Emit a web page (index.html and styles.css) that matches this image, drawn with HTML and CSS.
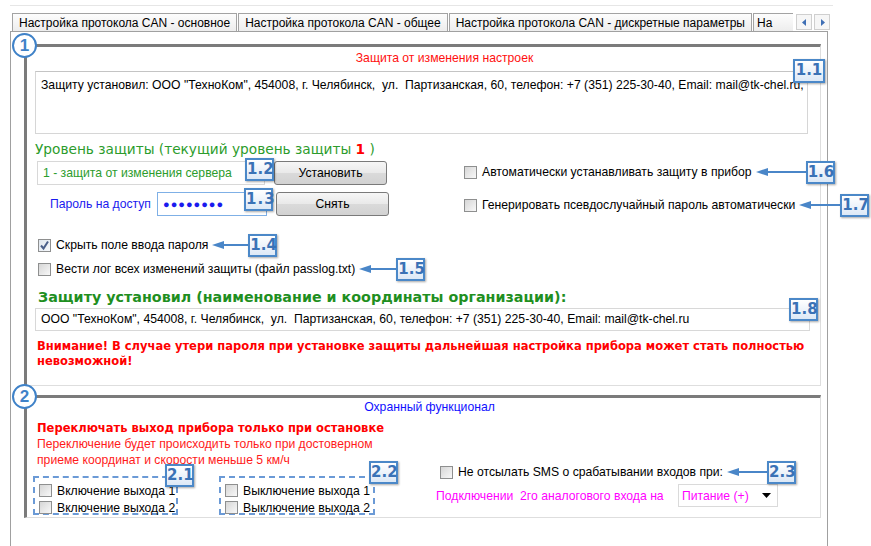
FILE: index.html
```html
<!DOCTYPE html>
<html>
<head>
  <meta charset="utf-8">
  <title>Защита от изменения настроек</title>
  <link rel="stylesheet" href="styles.css">
</head>
<body>
  <div class="frame">
    <div class="tabstrip">
      <div class="tablist">
        <div class="tab">Настройка протокола CAN - основное</div>
        <div class="tab">Настройка протокола CAN - общее</div>
        <div class="tab">Настройка протокола CAN - дискретные параметры</div>
        <div class="tab tab-last">На</div>
      </div>
      <div class="scroller">
        <span class="scroll-btn"><svg width="5" height="7" viewBox="0 0 5 7"><path d="M4 0 L0 3.5 L4 7 Z" fill="#3f6fb5"/></svg></span>
        <span class="scroll-btn"><svg width="5" height="7" viewBox="0 0 5 7"><path d="M1 0 L5 3.5 L1 7 Z" fill="#3f6fb5"/></svg></span>
      </div>
    </div>

    <div class="page">
      <div class="group group-protect">
        <span class="num">1</span>
        <div class="group-title title-red">Защита от изменения настроек</div>

        <div class="memo">Защиту установил: ООО "ТехноКом", 454008, г. Челябинск,&nbsp; ул.&nbsp; Партизанская, 60, телефон: +7 (351) 225-30-40, Email: mail@tk-chel.ru,
          <span class="callout c-11">1.1</span>
        </div>

        <div class="level">
          <div class="level-left">
            <div class="level-title">Уровень защиты (текущий уровень защиты <b class="cur">1</b> )</div>
            <div class="level-row">
              <div class="field field-level">1 - защита от изменения сервера
                <span class="callout c-12">1.2</span>
              </div>
              <div class="btn">Установить</div>
            </div>
            <div class="level-row row-pass">
              <span class="pass-label">Пароль на доступ</span>
              <div class="field field-pass">●●●●●●●●
                <span class="callout c-13">1.3</span>
              </div>
              <div class="btn">Снять</div>
            </div>
          </div>
          <div class="level-right">
            <div class="check-row">
              <span class="cb"></span>
              <span>Автоматически устанавливать защиту в прибор</span>
              <svg class="arrow" width="50" height="10" viewBox="0 0 50 10"><path d="M0 5 L12 1 L12 9 Z" fill="#4a86c8"/><path d="M10 5 H50" stroke="#4a86c8" stroke-width="2"/></svg>
              <span class="callout">1.6</span>
            </div>
            <div class="check-row row-gen">
              <span class="cb"></span>
              <span>Генерировать псевдослучайный пароль автоматически</span>
              <svg class="arrow" width="41" height="10" viewBox="0 0 41 10"><path d="M0 5 L12 1 L12 9 Z" fill="#4a86c8"/><path d="M10 5 H41" stroke="#4a86c8" stroke-width="2"/></svg>
              <span class="callout">1.7</span>
            </div>
          </div>
        </div>

        <div class="check-row row-hide">
          <span class="cb cb-on"><svg width="11" height="11" viewBox="0 0 11 11"><path d="M2 5.5 L4.5 8.5 L9 1.5" fill="none" stroke="#4a5f8a" stroke-width="2"/></svg></span>
          <span>Скрыть поле ввода пароля</span>
          <svg class="arrow" width="36" height="10" viewBox="0 0 36 10"><path d="M0 5 L12 1 L12 9 Z" fill="#4a86c8"/><path d="M10 5 H36" stroke="#4a86c8" stroke-width="2"/></svg>
          <span class="callout">1.4</span>
        </div>
        <div class="check-row row-log">
          <span class="cb"></span>
          <span>Вести лог всех изменений защиты (файл passlog.txt)</span>
          <svg class="arrow" width="37" height="10" viewBox="0 0 37 10"><path d="M0 5 L12 1 L12 9 Z" fill="#4a86c8"/><path d="M10 5 H37" stroke="#4a86c8" stroke-width="2"/></svg>
          <span class="callout">1.5</span>
        </div>

        <div class="owner-title">Защиту установил (наименование и координаты организации):</div>
        <div class="field field-owner">ООО "ТехноКом", 454008, г. Челябинск,&nbsp; ул.&nbsp; Партизанская, 60, телефон: +7 (351) 225-30-40, Email: mail@tk-chel.ru
          <span class="callout c-18">1.8</span>
        </div>

        <div class="warning">Внимание! В случае утери пароля при установке защиты дальнейшая настройка прибора может стать полностью невозможной!</div>
      </div>

      <div class="group group-guard">
        <span class="num">2</span>
        <div class="group-title title-blue">Охранный функционал</div>
        <div class="guard-body">
          <div class="guard-left">
            <div class="guard-head">Переключать выход прибора только при остановке</div>
            <div class="guard-note">Переключение будет происходить только при достоверном<br>приеме координат и скорости меньше 5 км/ч</div>
            <div class="outs">
              <div class="dash dash-on">
                <span class="callout c-21">2.1</span>
                <div class="check-row"><span class="cb"></span><span>Включение выхода 1</span></div>
                <div class="check-row"><span class="cb"></span><span>Включение выхода 2</span></div>
              </div>
              <div class="dash dash-off">
                <span class="callout c-22">2.2</span>
                <div class="check-row"><span class="cb"></span><span>Выключение выхода 1</span></div>
                <div class="check-row"><span class="cb"></span><span>Выключение выхода 2</span></div>
              </div>
            </div>
          </div>
          <div class="guard-right">
            <div class="check-row row-sms">
              <span class="cb"></span>
              <span>Не отсылать SMS о срабатывании входов при:</span>
              <svg class="arrow" width="40" height="10" viewBox="0 0 40 10"><path d="M0 5 L12 1 L12 9 Z" fill="#4a86c8"/><path d="M10 5 H40" stroke="#4a86c8" stroke-width="2"/></svg>
              <span class="callout">2.3</span>
            </div>
            <div class="analog-row">
              <span class="analog-label">Подключении&nbsp; 2го аналогового входа на</span>
              <div class="combo">Питание (+)
                <svg width="9" height="5" viewBox="0 0 9 5"><path d="M0 0 H9 L4.5 5 Z" fill="#000"/></svg>
              </div>
            </div>
          </div>
        </div>
      </div>
    </div>
  </div>
</body>
</html>
```

FILE: styles.css
```css
body {
  margin: 0;
  background-color: #ffffff;
  color: #000000;
  font-family: "Liberation Sans", Arial, sans-serif;
  font-size: 12.2px;
}

.frame {
  margin: 5px 0 0 10px;
  width: 823px;
  padding-top: 7px;
  border-top: 1px solid #e6e6e6;
}

/* tabs */

.tabstrip {
  display: flex;
  align-items: flex-start;
  width: 820px;
  margin-left: 2px;
}

.tablist {
  display: flex;
  flex: 1;
  height: 18px;
  overflow: hidden;
}

.tab {
  flex-shrink: 0;
  height: 17px;
  line-height: 18px;
  padding: 0 6px;
  margin-right: 1px;
  border: 1px solid #a3a3a3;
  border-bottom: none;
  background: linear-gradient(#fdfdfd, #ededed);
  font-size: 12px;
  white-space: nowrap;
}

.tab-last {
  flex: 1 0 auto;
  padding: 0 3px;
  border-right: none;
}

.scroller {
  display: flex;
  gap: 2px;
  padding: 1px 2px 0 2px;
}

.scroll-btn {
  display: flex;
  align-items: center;
  justify-content: center;
  width: 14px;
  height: 14px;
  border: 1px solid #cfcfcf;
  background: #f6f6f6;
}

.page {
  width: 816px;
  min-height: 520px;
  border: 1px solid #a0a0a0;
  border-bottom: none;
  padding-top: 12px;
}

/* group boxes */

.group {
  position: relative;
  box-sizing: border-box;
  width: 797px;
  margin-left: 13px;
  border-top: 3px solid #7b7b7b;
  border-left: 3px solid #7b7b7b;
  border-right: 1px solid #dedede;
  border-bottom: 1px solid #dedede;
  padding: 4px 12px 0 8px;
}

.num {
  position: absolute;
  left: -15px;
  top: -14px;
  width: 21px;
  height: 21px;
  border: 2px solid #3f82c8;
  border-radius: 50%;
  background: #ffffff;
  color: #3f82c8;
  font-weight: bold;
  font-size: 17px;
  line-height: 21px;
  text-align: center;
}

.group-title {
  height: 14px;
  line-height: 14px;
  text-align: center;
}

.title-red {
  color: #ff1010;
  padding-left: 46px;
}

.title-blue {
  color: #1010ff;
  padding-left: 16px;
}

.callout {
  position: relative;
  display: inline-block;
  box-sizing: border-box;
  width: 29px;
  height: 23px;
  border: 2px solid #4b88c8;
  background: linear-gradient(#ffffff, #dce8f6);
  color: #3a72b6;
  font-family: "DejaVu Sans", sans-serif;
  font-weight: bold;
  font-size: 15px;
  line-height: 19px;
  text-align: center;
  box-shadow: 1px 1px 2px rgba(0, 0, 0, 0.35);
}

.memo .callout,
.field .callout,
.dash .callout {
  position: absolute;
}

.memo {
  position: relative;
  box-sizing: border-box;
  height: 63px;
  margin-top: 6px;
  padding: 6px 5px;
  border: 1px solid #d6d6d6;
  border-top-color: #c4c4c4;
  white-space: nowrap;
}

.c-11 {
  left: 757px;
  top: -13px;
  width: 32px;
  height: 24px;
}

/* protection level */

.level {
  display: flex;
}

.level-left {
  width: 354px;
}

.level-title {
  margin-top: 7px;
  font-family: "DejaVu Sans", sans-serif;
  font-size: 13.7px;
  line-height: 16px;
  color: #2c9c2c;
  white-space: nowrap;
}

.cur {
  color: #ff0000;
}

.level-row {
  display: flex;
  align-items: center;
  margin-top: 4px;
}

.row-pass {
  margin-top: 7px;
}

.field {
  position: relative;
  box-sizing: border-box;
  height: 24px;
  line-height: 22px;
  padding: 0 5px;
  border: 1px solid #d8d8d8;
  white-space: nowrap;
}

.field-level {
  width: 228px;
  margin-left: 2px;
  color: #2c9c2c;
}

.c-12 {
  left: 207px;
  top: -4px;
}

.pass-label {
  width: 122px;
  padding-left: 15px;
  box-sizing: border-box;
  color: #1a1aee;
}

.field-pass {
  width: 110px;
  border-color: #7fb0e6;
  color: #1a1aee;
  font-size: 11px;
  letter-spacing: 1px;
}

.c-13 {
  left: 86px;
  top: -5px;
}

.btn {
  box-sizing: border-box;
  width: 113px;
  height: 24px;
  margin-left: 9px;
  line-height: 22px;
  border: 1px solid #7a7a7a;
  border-radius: 3px;
  background: linear-gradient(#f6f6f6 0%, #e9e9e9 50%, #dadada 51%, #d2d2d2 100%);
  text-align: center;
}

.level-right {
  padding: 31px 0 0 75px;
}

.row-gen {
  margin-top: 19px;
}

/* checkboxes */

.check-row {
  display: flex;
  align-items: center;
  height: 14px;
  white-space: nowrap;
}

.cb {
  display: inline-flex;
  align-items: center;
  justify-content: center;
  box-sizing: border-box;
  width: 13px;
  height: 13px;
  margin-right: 5px;
  border: 1px solid #8e8f8f;
  background: linear-gradient(135deg, #d6d6d6, #f8f8f8);
  flex-shrink: 0;
}

.cb-on {
  background: linear-gradient(135deg, #dfe6ee, #f6f8fb);
}

.arrow {
  flex-shrink: 0;
  margin-left: 4px;
}

.check-row > .callout {
  flex-shrink: 0;
}

.row-hide {
  margin-top: 22px;
  padding-left: 3px;
}

.row-log {
  margin-top: 10px;
  padding-left: 3px;
}

.owner-title {
  margin-top: 13px;
  padding-left: 3px;
  font-family: "DejaVu Sans", sans-serif;
  font-weight: bold;
  font-size: 14.3px;
  line-height: 16px;
  color: #1f8f1f;
  white-space: nowrap;
}

.field-owner {
  height: 23px;
  line-height: 21px;
  margin-top: 3px;
  width: 775px;
}

.c-18 {
  left: 753px;
  top: -11px;
}

.warning {
  margin-top: 8px;
  padding: 0 0 16px 2px;
  font-family: "DejaVu Sans", sans-serif;
  font-weight: bold;
  font-size: 11.5px;
  line-height: 15px;
  color: #ff0000;
}

/* guard group */

.group-guard {
  margin-top: 9px;
  padding-top: 2px;
  height: 123px;
}

.guard-body {
  display: flex;
}

.guard-left {
  width: 380px;
  flex-shrink: 0;
}

.guard-head {
  margin-top: 7px;
  padding-left: 2px;
  font-family: "DejaVu Sans", sans-serif;
  font-weight: bold;
  font-size: 11.5px;
  line-height: 14px;
  color: #ff0000;
  white-space: nowrap;
}

.guard-note {
  margin-top: 1px;
  padding-left: 2px;
  line-height: 16px;
  color: #ff1a1a;
  white-space: nowrap;
}

.outs {
  display: flex;
  gap: 41px;
  margin-top: 8px;
  margin-left: -2px;
}

.dash {
  position: relative;
  box-sizing: border-box;
  height: 39px;
  padding: 4px 0 0 4px;
  border: 2px dashed #6b9ad6;
}

.dash .check-row {
  height: 17px;
}

.dash-on {
  width: 145px;
}

.dash-off {
  width: 156px;
}

.c-21 {
  left: 130px;
  top: -14px;
}

.c-22 {
  left: 148px;
  top: -17px;
}

.guard-right {
  padding: 51px 0 0 21px;
}

.row-sms {
  padding-left: 4px;
}

.analog-row {
  display: flex;
  align-items: center;
  margin-top: 5px;
}

.analog-label {
  width: 242px;
  color: #ff00ff;
  white-space: nowrap;
}

.combo {
  display: flex;
  align-items: center;
  justify-content: space-between;
  box-sizing: border-box;
  width: 100px;
  height: 23px;
  padding: 0 6px 0 3px;
  border: 1px solid #dadada;
  color: #ff00ff;
}
```
